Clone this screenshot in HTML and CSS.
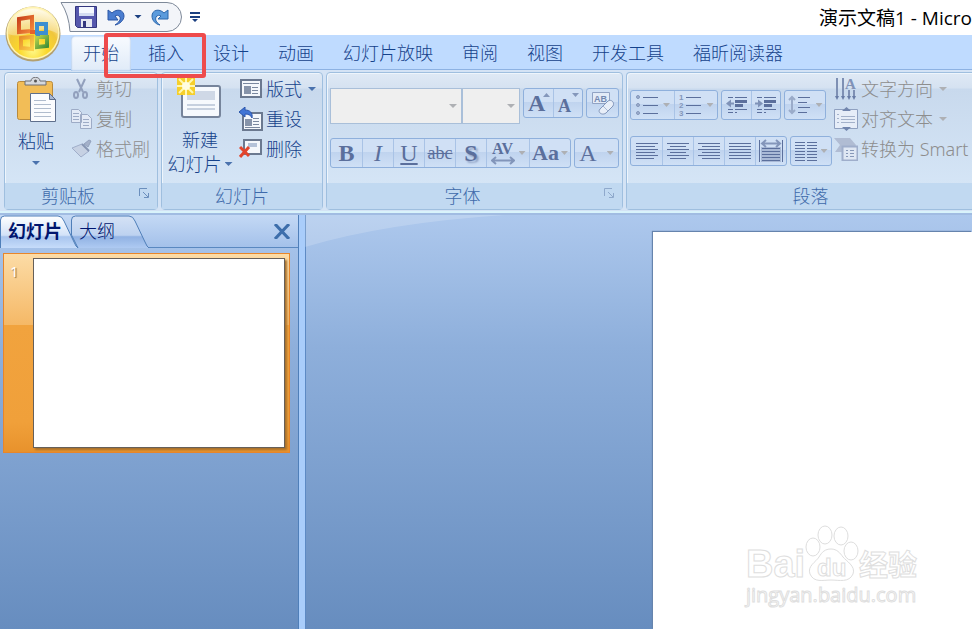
FILE: index.html
```html
<!DOCTYPE html>
<html lang="zh-CN">
<head>
  <meta charset="UTF-8">
  <title>演示文稿1</title>
  <link rel="stylesheet" href="styles.css">
</head>
<body>

  <header class="titlebar">
    <button class="orb" aria-label="Office">
      <svg width="58" height="58" viewBox="0 0 58 58">
        <defs>
          <radialGradient id="orbFill" cx="50%" cy="85%" r="80%">
            <stop offset="0" stop-color="#fff98a"/>
            <stop offset=".35" stop-color="#fbd82c"/>
            <stop offset=".65" stop-color="#f0c63c"/>
            <stop offset="1" stop-color="#fff6d0"/>
          </radialGradient>
          <linearGradient id="orbShine" x1="0" y1="0" x2="0" y2="1">
            <stop offset="0" stop-color="#fffdf0"/>
            <stop offset="1" stop-color="#f6dc8a"/>
          </linearGradient>
          <linearGradient id="red" x1="0" y1="0" x2="1" y2="1"><stop offset="0" stop-color="#c8401a"/><stop offset="1" stop-color="#f58a3c"/></linearGradient>
          <linearGradient id="amber" x1="0" y1="0" x2="1" y2="1"><stop offset="0" stop-color="#e8902a"/><stop offset="1" stop-color="#fbd04a"/></linearGradient>
          <linearGradient id="green" x1="0" y1="0" x2="1" y2="1"><stop offset="0" stop-color="#b5cf4d"/><stop offset="1" stop-color="#3f8f36"/></linearGradient>
        </defs>
        <circle cx="28" cy="30" r="27.500" fill="#b3a070"/>
        <circle cx="28" cy="29" r="26.500" fill="#fff3b0"/>
        <circle cx="28" cy="29" r="25" fill="url(#orbFill)"/>
        <path d="M3 30a25 25 0 0 1 50 0Q41 22 28 28T3 30z" fill="url(#orbShine)" opacity=".75"/>
        <g fill="none" stroke-width="4">
          <path d="M14 15l13-2v14l-13 1z" stroke="url(#red)"/>
          <path d="M32 20h9v9h-9z" stroke="#3d8fd0"/>
          <path d="M16 34l11-1v12l-11-1z" stroke="url(#amber)"/>
          <path d="M32 33h10v9l-10 1z" stroke="url(#green)"/>
        </g>
        <path d="M25 26h5v4h-5z" fill="#e8602b"/>
        <path d="M31 28l4 1v3h-4z" fill="#4b8ac4"/>
      </svg>
    </button>
    <div class="quick">
      <svg class="quick-shape" width="124" height="31" viewBox="0 0 124 31" aria-hidden="true">
        <path d="M1 .5h106a14.500 14.500 0 0 1 0 29H10Q9 13 1 .5z" fill="#f3f5f9" stroke="#7e8999"/>
      </svg>
      <button class="quick-btn" aria-label="保存">
        <svg width="24" height="24" viewBox="0 0 24 24">
          <path d="M1.500 1.500h21v21h-19l-2-2z" fill="#5557ad" stroke="#33367e"/>
          <path d="M5 2h15v9H5z" fill="#f5f8ff"/>
          <path d="M5 8h15v3H5z" fill="#d4dcf2"/>
          <path d="M7 14h11v8H7z" fill="#e6e8f2"/>
          <path d="M9 16h3v6H9z" fill="#33367e"/>
        </svg>
      </button>
      <button class="quick-btn" aria-label="撤消">
        <svg width="20" height="20" viewBox="0 0 20 20">
          <path d="M6 6c5-5 12-3 12 3 0 4-4 8-9 9 4-3 6-5 5-8-1-2-4-2-5-1l3 4H2V3z" fill="#4a7dd0" stroke="#2b56a5"/>
        </svg>
      </button>
      <i class="arrow dark"></i>
      <button class="quick-btn redo" aria-label="恢复">
        <svg width="20" height="20" viewBox="0 0 20 20">
          <path d="M14 6C9 1 2 3 2 9c0 4 3 8 8 9-4-3-5-5-4-8 1-2 4-2 5-1l-3 3h10V3z" fill="#5b9bdc" stroke="#2b66ac"/>
        </svg>
      </button>
      <button class="quick-more" aria-label="自定义快速访问工具栏">
        <svg width="10" height="12" viewBox="0 0 10 12"><path d="M0 1h10v2H0zM0 5h10v2H0zM2 8h6l-3 3z" fill="#1b3f80"/></svg>
      </button>
    </div>
    <h1 class="title">演示文稿1 - Micro</h1>
  </header>

  <nav class="tabs">
    <a href="#" class="tab active">开始</a>
    <a href="#" class="tab">插入</a>
    <a href="#" class="tab">设计</a>
    <a href="#" class="tab">动画</a>
    <a href="#" class="tab">幻灯片放映</a>
    <a href="#" class="tab">审阅</a>
    <a href="#" class="tab">视图</a>
    <a href="#" class="tab">开发工具</a>
    <a href="#" class="tab">福昕阅读器</a>
    <div class="highlight"></div>
  </nav>

  <div class="ribbon">
    <section class="group clipboard">
      <div class="group-body">
        <button class="big">
          <svg width="44" height="48" viewBox="-2 0 44 48">
            <rect x="1.500" y="4.500" width="35" height="38" rx="2" fill="#f2bd57" stroke="#b98a3c"/>
            <path d="M9 8V4h6c0-5 9-5 9 0h6v4z" fill="#d5d8dd" stroke="#6f6f73"/>
            <circle cx="19.500" cy="4" r="1.500" fill="#555"/>
            <path d="M14.500 16.500h19l6 6v22h-25z" fill="#fbfcfe" stroke="#5f6f8c"/>
            <path d="M33.500 16.500v6h6z" fill="#a9b8d2" stroke="#5f6f8c"/>
            <path d="M18 23.500h12M18 27.500h17M18 31.500h17M18 35.500h17M18 39.500h17" stroke="#b0bccd"/>
          </svg>
          <span>粘贴</span>
          <i class="arrow blue"></i>
        </button>
        <div class="stack">
          <button class="item" disabled>
            <svg width="22" height="22" viewBox="0 0 22 22" fill="none" stroke="#92a0bd" stroke-width="2">
              <path d="M6 1l6 13M14 1L8 14"/><ellipse cx="5" cy="17" rx="2" ry="3"/><ellipse cx="14" cy="17" rx="2" ry="3"/>
            </svg>剪切</button>
          <button class="item" disabled>
            <svg width="22" height="22" viewBox="0 0 22 22" fill="#e3eaf6" stroke="#9dabc6">
              <path d="M.5 1.500h7l3 3v10H.5zM9.500 6.500h7l4 4v10h-11z"/>
              <path d="M2 5.500h6M2 8.500h6M2 11.500h6M12 11.500h6M12 14.500h6M12 17.500h6"/>
            </svg>复制</button>
          <button class="item" disabled>
            <svg width="22" height="22" viewBox="0 0 22 22">
              <path d="M13 6l5-4 2 1-3 6z" fill="#a4b1ca" stroke="#92a1bd"/>
              <path d="M1 10l10-4 7 7-8 6z" fill="#c6d1e3" stroke="#a0aeca"/>
              <path d="M11 6l7 7" stroke="#8695b3" stroke-width="2"/>
            </svg>格式刷</button>
        </div>
      </div>
      <h2 class="group-label">剪贴板</h2>
      <button class="launcher" aria-label="剪贴板选项"><svg width="11" height="11" viewBox="0 0 11 11" fill="none" stroke="#6b8fbd"><path d="M.5 8V.5H8M4 4l5 5M9.500 5v4.500H5"/></svg></button>
    </section>

    <section class="group slides">
      <div class="group-body">
        <button class="big new-slide">
          <svg width="48" height="44" viewBox="0 0 48 44">
            <rect x="6" y="9" width="38" height="31" rx="2" fill="#f6f9fd" stroke="#76849b" stroke-width="2"/>
            <path d="M11 14h28v9H11z" fill="#cfd8e6"/>
            <path d="M11 28h28M11 32h28" stroke="#c6d0df" stroke-width="2"/>
            <path d="M1 0h18v18H1z" fill="#f6cf2b"/>
            <path d="M10 0v18M1 9h18M3 2l14 14M17 2L3 16" stroke="#fff7b0" stroke-width="2"/>
            <circle cx="10" cy="9" r="4" fill="#fffde0"/>
          </svg>
          <span>新建</span>
          <span class="with-arrow">幻灯片<i class="arrow blue"></i></span>
        </button>
        <div class="stack">
          <button class="item">
            <svg width="24" height="22" viewBox="0 0 24 22">
              <rect x="2" y="2" width="20" height="17" fill="#f4f7fb" stroke="#6b7990" stroke-width="2"/>
              <path d="M4 5.500h16M13 9.500h6M13 12.500h6M13 15.500h6" stroke="#7a889f"/><path d="M5 8h7v8H5z" fill="#8794aa"/>
            </svg>版式<i class="arrow blue"></i></button>
          <button class="item">
            <svg width="24" height="24" viewBox="0 0 24 24">
              <rect x="4" y="6" width="19" height="17" fill="#f4f7fb" stroke="#6b7990" stroke-width="2"/>
              <path d="M14 11.500h6M14 14.500h6M14 17.500h6M6 20.500h15" stroke="#7a889f"/><path d="M6 12h7v7H6z" fill="#8794aa"/>
              <path d="M0 5l6-5v3c5 0 8 3 7 8-1-3-4-4-7-4v3z" fill="#4175d6" stroke="#2b55ab"/>
            </svg>重设</button>
          <button class="item">
            <svg width="24" height="22" viewBox="0 0 24 22">
              <rect x="5" y="2" width="17" height="14" fill="#f4f7fb" stroke="#6b7990" stroke-width="2"/>
              <path d="M9 5h9v4H9z" fill="#b4c2d8"/>
              <path d="M1 9l9 9M10 9l-9 10" stroke="#e2442c" stroke-width="3"/>
            </svg>删除</button>
        </div>
      </div>
      <h2 class="group-label">幻灯片</h2>
    </section>

    <section class="group font">
      <div class="group-body rows">
        <div class="row">
          <div class="fields">
            <label class="field"><select aria-label="字体" disabled></select><i class="arrow"></i></label>
            <label class="field size"><select aria-label="字号" disabled></select><i class="arrow"></i></label>
          </div>
          <div class="bar sizes">
            <button disabled aria-label="增大字号"><b class="grow">A</b><i class="arrow up"></i></button>
            <button disabled aria-label="减小字号"><b class="shrink">A</b><i class="arrow top"></i></button>
          </div>
          <div class="bar">
            <button disabled aria-label="清除格式">
              <svg width="26" height="26" viewBox="0 0 26 26">
                <path d="M2.500 2.500h17v11h-17z" fill="#e3ebf7" stroke="#91a3c4"/>
                <text x="4" y="12" class="ab">AB</text>
                <path d="M10 19L18 11c3-2 7 1 5 5l-7 7c-4 3-9-1-6-4z" fill="#e8eef8" stroke="#8296ba"/>
                <path d="M13 16l5 5" stroke="#a9b9d4"/>
              </svg>
            </button>
          </div>
        </div>
        <div class="row">
          <div class="bar letters">
            <button disabled><b>B</b></button>
            <button disabled><em>I</em></button>
            <button disabled><u>U</u></button>
            <button disabled><s>abc</s></button>
            <button disabled><b class="shadow">S</b></button>
            <button disabled class="spacing">
              <span class="av">AV<svg width="24" height="9" viewBox="0 0 24 9" fill="none" stroke="#8295ba" stroke-width="2"><path d="M1 4.500h22M5 1L1 4.500 5 8M19 1l4 3.500L19 8"/></svg></span>
              <i class="arrow"></i>
            </button>
            <button disabled class="case"><b>Aa</b><i class="arrow"></i></button>
          </div>
          <div class="bar letters">
            <button disabled class="color"><span>A</span><i class="arrow"></i></button>
          </div>
        </div>
      </div>
      <h2 class="group-label">字体</h2>
      <button class="launcher" aria-label="字体选项"><svg width="11" height="11" viewBox="0 0 11 11" fill="none" stroke="#8fa9cc"><path d="M.5 8V.5H8M4 4l5 5M9.500 5v4.500H5"/></svg></button>
    </section>

    <section class="group paragraph">
      <div class="group-body">
        <div class="rows">
          <div class="row">
            <div class="bar lists">
              <button disabled aria-label="项目符号">
                <svg width="24" height="22" viewBox="0 0 24 22" stroke="#5b6f9c"><path d="M8 3.500h15M8 11.500h15M8 19.500h15"/><g fill="#9fb0cf" stroke="#8396ba"><circle cx="3" cy="3" r="1.500"/><circle cx="3" cy="11" r="1.500"/><circle cx="3" cy="19" r="1.500"/></g></svg>
                <i class="arrow"></i>
              </button>
              <button disabled aria-label="编号">
                <svg width="24" height="26" viewBox="0 0 24 26"><path d="M7 5.500h15M7 13.500h15M7 21.500h15" stroke="#5b6f9c"/><g class="nums"><text x="0" y="8">1</text><text x="0" y="16">2</text><text x="0" y="24">3</text></g></svg>
                <i class="arrow"></i>
              </button>
            </div>
            <div class="bar indents">
              <button disabled aria-label="减少缩进">
                <svg width="22" height="20" viewBox="0 0 22 20"><path d="M2 2.500h5M9 2.500h12M2 14.500h5M9 14.500h12M2 17.500h5M9 17.500h2" stroke="#5b6f9c"/><path d="M9 5h12v3H9zM9 9h8v3H9z" fill="#5b6f9c"/><path d="M0 8.500l5-4v3h3v2H5v3z" fill="#7f92b8"/></svg>
              </button>
              <button disabled aria-label="增加缩进">
                <svg width="22" height="20" viewBox="0 0 22 20"><path d="M2 2.500h5M9 2.500h12M2 14.500h5M9 14.500h12M2 17.500h5M9 17.500h2" stroke="#5b6f9c"/><path d="M9 5h12v3H9zM9 9h8v3H9z" fill="#5b6f9c"/><path d="M8 8.500l-5-4v3H0v2h3v3z" fill="#7f92b8"/></svg>
              </button>
            </div>
            <div class="bar">
              <button disabled class="wide" aria-label="行距">
                <svg width="24" height="20" viewBox="0 0 24 20" stroke="#5b6f9c"><path d="M10 2.500h12M10 7.500h9M10 12.500h12M10 17.500h9"/><path d="M4 2v16M1 5l3-3 3 3M1 15l3 3 3-3" fill="none" stroke="#9aabc9" stroke-width="2"/></svg>
                <i class="arrow"></i>
              </button>
            </div>
          </div>
          <div class="row">
            <div class="bar">
              <button disabled aria-label="左对齐"><svg width="22" height="16" viewBox="0 0 22 16" stroke="#5b6f9c"><path d="M0 .5h22M0 3.500h19M0 6.500h22M0 9.500h19M0 12.500h22M0 15.500h18"/></svg></button>
              <button disabled aria-label="居中"><svg width="22" height="16" viewBox="0 0 22 16" stroke="#5b6f9c"><path d="M0 .5h22M3 3.500h16M0 6.500h22M3 9.500h16M0 12.500h22M3 15.500h16"/></svg></button>
              <button disabled aria-label="右对齐"><svg width="22" height="16" viewBox="0 0 22 16" stroke="#5b6f9c"><path d="M0 .5h22M4 3.500h18M0 6.500h22M4 9.500h18M0 12.500h22M4 15.500h18"/></svg></button>
              <button disabled aria-label="两端对齐"><svg width="22" height="16" viewBox="0 0 22 16" stroke="#5b6f9c"><path d="M0 .5h22M0 3.500h22M0 6.500h22M0 9.500h22M0 12.500h22M0 15.500h22"/></svg></button>
              <button disabled aria-label="分散对齐"><svg width="26" height="24" viewBox="0 0 26 24" stroke="#5b6f9c"><path d="M3 8h20v15H3z" fill="#a9b9d6" stroke="none"/><path d="M1.500 1v22M24.500 1v22M4 9.500h18M4 12.500h18M4 15.500h18M4 18.500h18M4 21.500h18"/><path d="M4 4.500h18M8 1L4 4.500 8 8M18 1l4 3.500L18 8" fill="none" stroke="#8496ba" stroke-width="2"/></svg></button>
            </div>
            <div class="bar">
              <button disabled class="wide" aria-label="分栏"><svg width="22" height="20" viewBox="0 0 22 20" stroke="#5b6f9c"><path d="M0 1.500h10M12 1.500h10M0 4.500h10M12 4.500h10M0 7.500h10M12 7.500h10M0 10.500h10M12 10.500h10M0 13.500h10M12 13.500h10M0 16.500h10M12 16.500h10M0 19.500h10M12 19.500h10"/></svg><i class="arrow"></i></button>
            </div>
          </div>
        </div>
        <div class="stack">
          <button class="item" disabled>
            <svg width="24" height="24" viewBox="0 0 24 24">
              <path d="M3 1v20M9 1v20M15 13v8M20 13v8" stroke="#7e90b4" stroke-width="2"/>
              <path d="M1 19h4l-2 4zM7 19h4l-2 4zM13 19h4l-2 4zM18 19h4l-2 4z" fill="#687ca6"/>
              <text x="11" y="12" class="dir">A</text>
            </svg>文字方向<i class="arrow"></i></button>
          <button class="item" disabled>
            <svg width="24" height="24" viewBox="0 0 24 24">
              <path d="M.5 2.500h23v19H.5z" fill="#e6edf8" stroke="#8fa0c0"/>
              <path d="M3 7.500h2M3 11.500h2M3 15.500h2M7 9.500h14M7 12.500h14M7 15.500h14" stroke="#a3b1ca"/>
              <path d="M8 4h9l-4.500-4zM8 20h9l-4.500 4z" fill="#7185ad"/>
            </svg>对齐文本<i class="arrow"></i></button>
          <button class="item" disabled>
            <svg width="24" height="24" viewBox="0 0 24 24">
              <path d="M0 1h16l6 7-4 7H1l5-7z" fill="#b0bcd3"/>
              <path d="M8.500 9.500h15v14h-15z" fill="#dfe7f3" stroke="#9faecb" stroke-width="2"/>
              <path d="M12 13.500h2M16 13.500h4M12 16.500h2M16 16.500h4M12 19.500h2M16 19.500h4" stroke="#8798b8"/>
            </svg>转换为 Smart</button>
        </div>
      </div>
      <h2 class="group-label">段落</h2>
    </section>
  </div>

  <main class="workspace">
    <aside class="pane">
      <div class="pane-head">
        <button class="pane-tab current">
          <svg width="78" height="33" viewBox="0 0 78 33" aria-hidden="true">
            <defs>
              <linearGradient id="tabOn" x1="0" y1="0" x2="0" y2="1"><stop offset="0" stop-color="#fff"/><stop offset=".6" stop-color="#d3e2f8"/><stop offset=".65" stop-color="#a9c5ee"/><stop offset="1" stop-color="#c6dcfa"/></linearGradient>
              <linearGradient id="tabOff" x1="0" y1="0" x2="0" y2="1"><stop offset="0" stop-color="#d5e2f5"/><stop offset=".6" stop-color="#bdd2f0"/><stop offset=".65" stop-color="#91b2e3"/><stop offset="1" stop-color="#aecaf2"/></linearGradient>
            </defs>
            <path d="M.5 33V5q0-4 4-4H58q4 0 6 5l10 21q2 5 4 6" fill="url(#tabOn)" stroke="#4f7fb9"/>
          </svg>
          <span>幻灯片</span>
        </button>
        <button class="pane-tab">
          <svg width="78" height="33" viewBox="0 0 78 33" aria-hidden="true">
            <path d="M7 33L.5 20V5q0-4 4-4H58q4 0 6 5l10 21q2 5 4 6" fill="url(#tabOff)" stroke="#4f7fb9"/>
          </svg>
          <span>大纲</span>
        </button>
        <button class="close" aria-label="关闭"><svg width="16" height="15" viewBox="0 0 16 15"><path d="M1 0l14 15M15 0L1 15" stroke="#3d6eab" stroke-width="3"/></svg></button>
      </div>
      <div class="thumb">
        <span class="thumb-no">1</span>
        <div class="thumb-slide"></div>
      </div>
    </aside>
    <div class="canvas">
      <svg class="swoosh" viewBox="0 0 348 32" preserveAspectRatio="none" aria-hidden="true"><path d="M0 0h200Q80 8 0 32z" fill="#fff" opacity=".18"/></svg>
      <div class="slide"></div>
    </div>
    <div class="watermark">
      <div class="logo">
        <span class="bai">Bai</span>
        <span class="paw">
          <svg width="56" height="58" viewBox="0 0 56 58" fill="#fff" stroke="#dedede">
            <ellipse cx="8" cy="23" rx="7" ry="9"/><ellipse cx="20" cy="11" rx="7" ry="9"/><ellipse cx="36" cy="12" rx="7" ry="9"/><ellipse cx="46" cy="27" rx="7" ry="9"/>
            <path d="M26 25c6 0 9 4 12 8s13 9 10 17c-4 9-14 6-22 6S9 59 5 50c-3-8 6-12 9-17s6-8 12-8z"/>
          </svg>
          <span class="du">du</span>
        </span>
        <span class="jy">经验</span>
      </div>
      <div class="url">jingyan.baidu.com</div>
    </div>
  </main>

</body>
</html>
```
FILE: styles.css
```css
* {
  box-sizing: border-box;
}
body {
  margin: 0;
  min-height: 100vh;
  display: flex;
  flex-direction: column;
  overflow: hidden;
  background: #fff;
  font-family: "Noto Sans", "Noto Sans CJK SC", sans-serif;
  font-size: 18px;
  line-height: 24px;
  color: #15428b;
}
button {
  margin: 0;
  padding: 0;
  border: 0;
  background: none;
  font: inherit;
  color: inherit;
}
svg {
  display: block;
  flex: none;
}
h1, h2 {
  margin: 0;
  font-size: 18px;
  font-weight: 300;
}

/* title bar */
.titlebar {
  position: relative;
  display: flex;
  height: 35px;
  padding-left: 60px;
}
.orb {
  position: absolute;
  left: 5px;
  top: 4px;
  z-index: 2;
}
.quick {
  position: relative;
  display: flex;
  align-items: center;
  height: 33px;
  padding-left: 14px;
}
.quick-shape {
  position: absolute;
  left: 0;
  top: 2px;
}
.quick-btn {
  position: relative;
  margin-right: 8px;
}
.quick .arrow {
  position: relative;
}
.redo {
  margin-left: 8px;
}
.quick-more {
  margin-left: 12px;
}
.title {
  margin-left: auto;
  padding-top: 6px;
  white-space: nowrap;
  font-family: "Open Sans", "Noto Sans CJK SC", sans-serif;
  font-size: 19px;
  font-weight: 400;
  color: #000;
}

.arrow {
  flex: none;
  width: 8px;
  height: 4px;
  background: #aeb0b4;
  clip-path: polygon(0 0, 100% 0, 50% 100%);
}
.arrow.blue {
  background: #4a72ad;
}
.arrow.dark {
  background: #1b3f80;
}

/* tabs */
.tabs {
  position: relative;
  display: flex;
  gap: 5px;
  height: 35px;
  padding-left: 71px;
  background: #bfdbff;
  border-bottom: 1px solid #8db2e3;
}
.tab {
  height: 35px;
  padding: 6px 12px 0;
  white-space: nowrap;
  text-decoration: none;
  font-weight: 300;
  color: #15428b;
}
.tab.active {
  margin-top: 1px;
  padding-top: 5px;
  border-radius: 4px 4px 0 0;
  background: linear-gradient(#f8fbff, #e0ebf8);
  box-shadow: inset 0 0 2px #6f9fdc;
}
.highlight {
  position: absolute;
  left: 104px;
  top: -2px;
  width: 102px;
  height: 45px;
  border: 4px solid #ee4b4c;
  border-radius: 3px;
  z-index: 3;
}

/* ribbon */
.ribbon {
  display: flex;
  gap: 3px;
  height: 143px;
  padding: 2px 0 1px 4px;
  background: #d4e3f5;
  border-bottom: 2px solid #d9f3fb;
}
.group {
  position: relative;
  display: flex;
  flex-direction: column;
  flex: none;
  border: 1px solid #9fbfdf;
  border-radius: 4px;
  box-shadow: inset 1px 1px #eef5fc;
  background: linear-gradient(#dfe9f5 0, #d5e2f1 15px, #c8d9ed 16px, #d8e8f8 100%);
}
.clipboard { width: 154px; }
.slides { width: 162px; }
.font { width: 297px; }
.paragraph {
  flex: 1 0 348px;
  border-right: 0;
  border-radius: 4px 0 0 4px;
}
.group-body {
  display: flex;
  flex: 1;
}
.group-label {
  height: 26px;
  line-height: 26px;
  text-align: center;
  background: #c1d9f1;
  color: #3e6aaa;
}
.clipboard .group-label {
  padding-right: 26px;
}
.font .group-label {
  padding-right: 24px;
}
.paragraph .group-label {
  padding-left: 20px;
}
.launcher {
  position: absolute;
  right: 7px;
  bottom: 10px;
}
.big {
  display: flex;
  flex-direction: column;
  align-items: center;
  width: 62px;
  padding-top: 4px;
  font-weight: 300;
}
.big span {
  padding-top: 4px;
}
.big .arrow {
  margin-top: 8px;
}
.new-slide {
  width: 76px;
}
.new-slide svg {
  margin-bottom: 3px;
}
.with-arrow {
  display: flex;
  align-items: center;
  gap: 3px;
}
.big .with-arrow {
  padding: 0;
}
.big .with-arrow .arrow {
  margin-top: 0;
}
.stack {
  display: flex;
  flex-direction: column;
  padding-top: 1px;
}
.clipboard .stack {
  padding-left: 4px;
}
.item {
  display: flex;
  align-items: center;
  gap: 3px;
  height: 30px;
  white-space: nowrap;
  font-weight: 300;
}
.slides .stack,
.paragraph .stack {
  padding-left: 1px;
}
.item .arrow {
  margin-left: 3px;
}
.item:disabled {
  color: #8d8d8d;
}

/* small button bars */
.rows {
  display: flex;
  flex-direction: column;
  padding-left: 3px;
}
.row {
  display: flex;
  align-items: flex-start;
  gap: 3px;
}
.font .row {
  flex: none;
}
.font .rows {
  padding-top: 15px;
  gap: 14px;
}
.paragraph .rows {
  width: 206px;
  padding-top: 17px;
  gap: 16px;
}
.bar {
  display: flex;
  height: 30px;
  border: 1px solid #8fb0dc;
  border-radius: 3px;
  background: linear-gradient(#d0e0f5 45%, #bfd3ee 46%, #cfe0f6);
}
.bar button {
  position: relative;
  display: flex;
  align-items: center;
  justify-content: center;
  gap: 4px;
  width: 31px;
  color: #5b6f9c;
}
.bar button + button {
  border-left: 1px solid #a9c3e6;
}
.bar .arrow {
  width: 7px;
}
.bar.sizes button,
.bar.indents button {
  width: 29px;
}
.bar .wide {
  width: 40px;
}
.bar.lists button {
  width: 43px;
}
.fields {
  display: flex;
}
.field {
  position: relative;
}
.field select {
  display: block;
  appearance: none;
  width: 132px;
  height: 36px;
  border: 1px solid #a9bfd9;
  border-radius: 0;
  background: #efefef;
  opacity: 1;
}
.size select {
  width: 58px;
}
.field .arrow {
  position: absolute;
  right: 5px;
  top: 16px;
}
.letters,
.sizes,
.av {
  font-family: "Liberation Serif", serif;
  font-size: 24px;
}
.letters s {
  font-size: 18px;
}
.shadow {
  text-shadow: 2px 2px 2px #8d9fc2;
}
.sizes .shrink {
  padding-top: 6px;
  font-size: 18px;
}
.sizes button {
  justify-content: flex-start;
  padding-left: 4px;
}
.sizes .arrow {
  position: absolute;
  right: 3px;
  top: 4px;
  background: #8497bb;
}
.sizes .up {
  clip-path: polygon(0 100%, 100% 100%, 50% 0);
}
.bar .spacing {
  width: 43px;
}
.av {
  font-size: 16px;
  line-height: 14px;
  font-weight: bold;
}
.bar .case {
  width: 41px;
  gap: 2px;
  font-size: 22px;
}
.bar .color {
  width: 43px;
  gap: 10px;
}
.ab {
  font: bold 9px "Liberation Sans", sans-serif;
  fill: #7489b1;
}
.nums {
  font: bold 8px "Liberation Sans", sans-serif;
  fill: #8396ba;
}
.dir {
  font: bold 15px "Liberation Serif", serif;
  fill: #8093b8;
}

/* workspace */
.workspace {
  position: relative;
  display: flex;
  flex: 1;
  border-top: 2px solid #a1bce2;
  background: linear-gradient(#adc8ed, #8eafdb 32%, #678dbf);
}
.pane {
  width: 299px;
  border-right: 1px solid #4f7fb9;
}
.pane-head {
  display: flex;
  height: 33px;
  border-bottom: 1px solid #5a88c0;
  background: linear-gradient(#c4d9f5, #a4c1ea);
}
.pane-tab {
  position: relative;
  width: 78px;
  padding-left: 8px;
  text-align: left;
  font-weight: 300;
  color: #00156e;
}
.pane-tab svg {
  position: absolute;
  left: 0;
  top: 0;
}
.pane-tab span {
  position: relative;
}
.pane-tab + .pane-tab {
  margin-left: -7px;
}
.current {
  z-index: 1;
  font-weight: 700;
}
.close {
  margin-left: auto;
  padding-right: 8px;
}
.thumb {
  display: flex;
  width: 287px;
  height: 200px;
  margin: 5px 3px;
  padding: 4px;
  border: 1px solid #e8862a;
  background: linear-gradient(#fcdca6, #f5b866 36%, #f1a33e 36%, #f0a03a 85%, #e8922c);
}
.thumb-no {
  width: 25px;
  padding: 3px 0 0 2px;
  font-size: 15px;
  line-height: 20px;
  color: #fff;
  text-shadow: 1px 1px 1px #8a6a3a;
}
.thumb-slide {
  flex: 1;
  border: 1px solid #66605a;
  background: #fff;
  box-shadow: 2px 2px 2px #a8712c;
}
.canvas {
  position: relative;
  display: flex;
  flex: 1;
  border-left: 6px solid #a9cdfb;
  box-shadow: inset 1px 0 #5d8ac4;
  padding: 17px 0 0 348px;
}
.swoosh {
  position: absolute;
  left: 0;
  top: 0;
  width: 348px;
  height: 32px;
}
.slide {
  flex: 1;
  background: #fff;
  box-shadow: -1px -1px 1px #6684ad;
}

/* watermark */
.watermark {
  position: absolute;
  right: 52px;
  bottom: 21px;
  width: 174px;
  color: #fff;
  -webkit-text-stroke: 1px #dedede;
}
.logo {
  display: flex;
  align-items: flex-end;
  height: 58px;
  font-weight: 700;
}
.bai {
  width: 59px;
  font-family: "Liberation Sans", sans-serif;
  font-size: 38px;
  line-height: 36px;
}
.paw {
  position: relative;
  width: 54px;
}
.du {
  position: absolute;
  left: 12px;
  bottom: 2px;
  font-family: "Liberation Sans", sans-serif;
  font-size: 24px;
}
.jy {
  font-size: 29px;
  line-height: 34px;
}
.url {
  font-family: "Open Sans", sans-serif;
  font-size: 20px;
  line-height: 26px;
}
```
